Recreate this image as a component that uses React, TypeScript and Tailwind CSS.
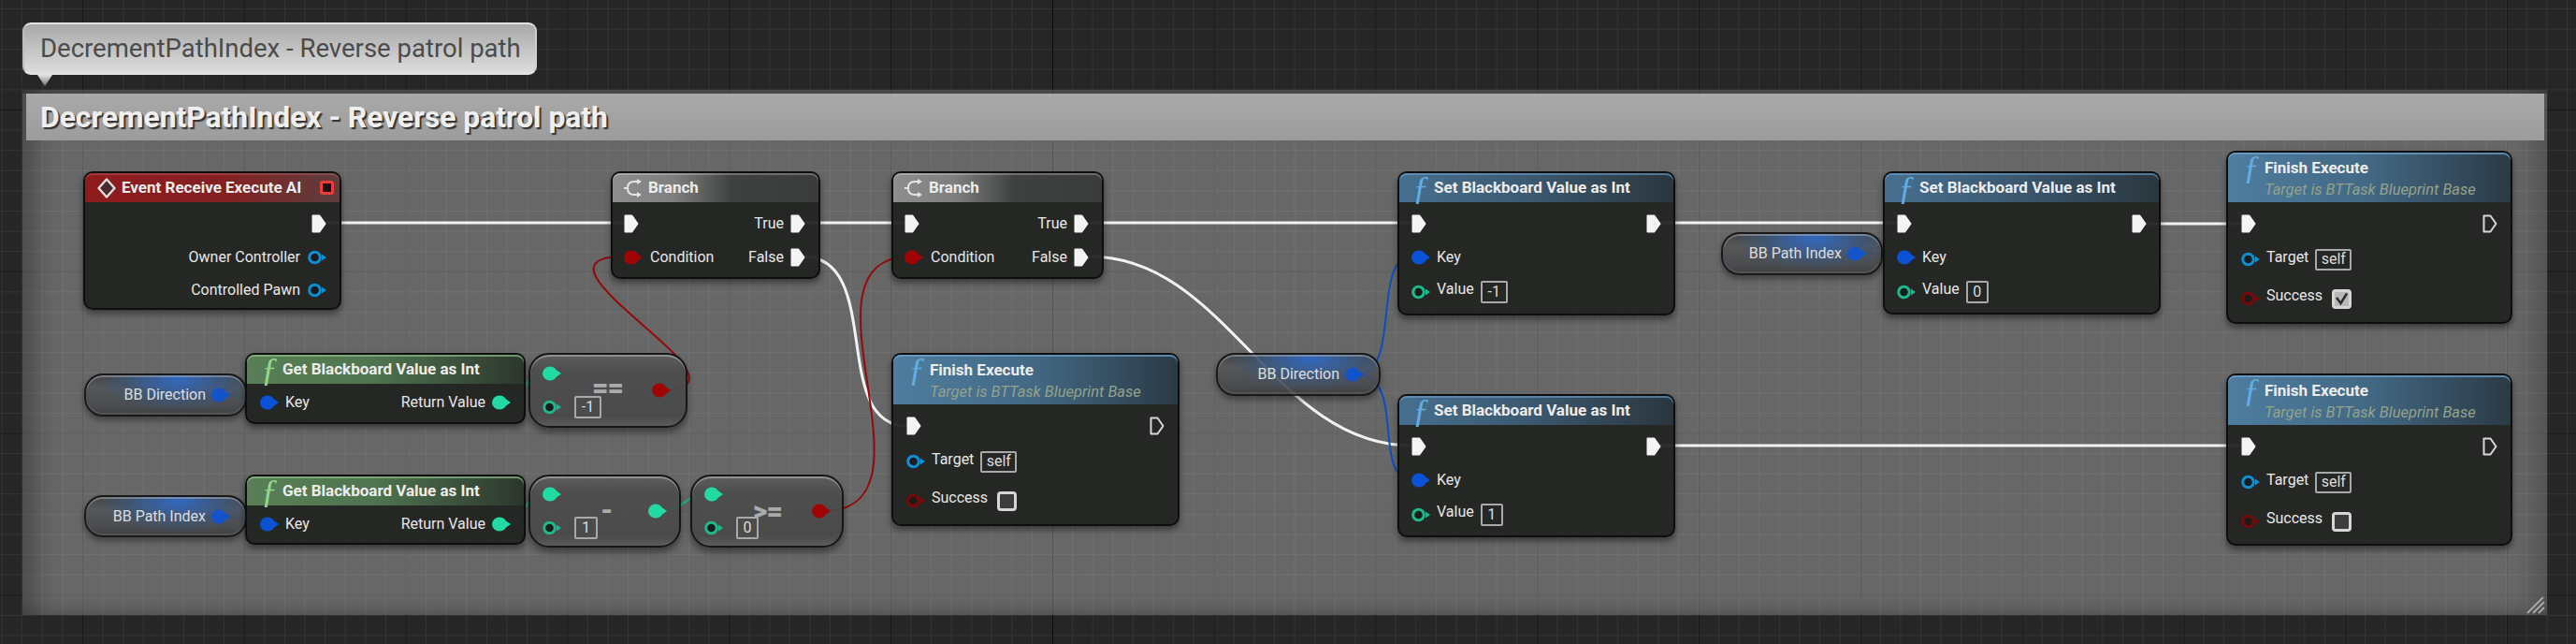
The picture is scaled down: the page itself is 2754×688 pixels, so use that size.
import React from "react";

const BLUE = "#0a8fd8";
const KEY = "#0a52d6";
const INT = "#22dba4";
const INTH = "#1fb88c";
const RED = "#a00505";
const REDH = "#7a0808";

function Pin({ color, hollow }: { color: string; hollow?: boolean }) {
  return (
    <svg width="20" height="16" viewBox="0 0 20 16" className="shrink-0">
      {hollow ? (
        <ellipse cx="7.5" cy="8" rx="5.8" ry="5.8" fill="#1a1c1b" stroke={color} strokeWidth="3" />
      ) : (
        <ellipse cx="8" cy="8" rx="8" ry="7.6" fill={color} />
      )}
      <path d="M15 4.5 L20 8 L15 11.5 Z" fill={color} />
    </svg>
  );
}

function Exec({ hollow }: { hollow?: boolean }) {
  return (
    <svg width="16" height="20" viewBox="0 0 16 20" className="shrink-0">
      <path
        d="M1.5 1.5 H8.5 L14.5 10 L8.5 18.5 H1.5 Z"
        fill={hollow ? "none" : "#f4f4f4"}
        stroke={hollow ? "#d8d8d8" : "#f4f4f4"}
        strokeWidth="2"
        strokeLinejoin="round"
      />
    </svg>
  );
}

function Label({ children, className = "" }: { children: React.ReactNode; className?: string }) {
  return <span className={"text-[16px] leading-none text-[#e8e8e8] whitespace-nowrap " + className}>{children}</span>;
}

function Box({ children, className = "" }: { children: React.ReactNode; className?: string }) {
  return (
    <span className={"flex items-center justify-center rounded-[2px] border-2 border-[#a9a9a9] text-[16px] leading-none text-[#dcdcdc] " + className}>
      {children}
    </span>
  );
}

function Check({ checked }: { checked?: boolean }) {
  return (
    <span
      className={
        "ml-[3px] flex h-[21px] w-[21px] items-center justify-center rounded-[4px] border-[3px] border-[#d6d6d6] " +
        (checked ? "bg-[#b8b8b8]" : "bg-[#3c3c3c]")
      }
    >
      {checked && (
        <svg width="15" height="15" viewBox="0 0 15 15">
          <path d="M2 6 L6.5 12 L13 1.5" fill="none" stroke="#2b2b2b" strokeWidth="2.4" />
        </svg>
      )}
    </span>
  );
}

function FIcon({ className }: { className: string }) {
  return (
    <span className={"[font-family:'Liberation_Serif',serif] italic text-[36px] leading-[28px] " + className}>ƒ</span>
  );
}

const nodeBase =
  "absolute rounded-[10px] border-2 border-[#0e0e0e] bg-[#222422]/95 shadow-[0_4px_7px_rgba(0,0,0,0.45)]";
const rowBase = "flex h-[36px] items-center justify-between";
const titleCls = "text-[17px] font-bold leading-none text-[#ececec] whitespace-nowrap";

function SetNode({ pos, value, boxW }: { pos: string; value: string; boxW: string }) {
  return (
    <div className={nodeBase + " " + pos}>
      <div className="flex h-[31px] items-center rounded-t-[8px] bg-[linear-gradient(to_right,#466f8f,#3c5a72_45%,#2a363e)] pl-[14px] shadow-[inset_0_2px_0_rgba(110,160,205,0.6)]">
        <FIcon className="w-[23px] text-[#62aee4]" />
        <span className={titleCls}>Set Blackboard Value as Int</span>
      </div>
      <div className="px-[13px] pt-[5px]">
        <div className={rowBase}>
          <Exec />
          <Exec />
        </div>
        <div className="flex h-[36px] items-center gap-[7px]">
          <Pin color={KEY} />
          <Label>Key</Label>
        </div>
        <div className="flex h-[38px] items-center gap-[7px]">
          <Pin color={INTH} hollow />
          <Label className="-translate-y-[3px]">Value</Label>
          <Box className={"h-[24px] " + boxW}>{value}</Box>
        </div>
      </div>
    </div>
  );
}

function FinishNode({ pos, checked }: { pos: string; checked?: boolean }) {
  return (
    <div className={nodeBase + " " + pos}>
      <div className="h-[53px] rounded-t-[8px] bg-[linear-gradient(to_right,#4f7d9f,#426884_50%,#2b3a45)] pl-[16px] pt-[2px] shadow-[inset_0_2px_0_rgba(110,165,210,0.7)]">
        <div className="flex h-[28px] items-center">
          <FIcon className="w-[23px] text-[#62aee4]" />
          <span className={titleCls}>Finish Execute</span>
        </div>
        <div className="ml-[23px] mt-[2px] text-[16.5px] italic leading-none text-[#94a28a] whitespace-nowrap">
          Target is BTTask Blueprint Base
        </div>
      </div>
      <div className="px-[14px] pt-[5px]">
        <div className={rowBase}>
          <Exec />
          <Exec hollow />
        </div>
        <div className="flex h-[40px] items-center gap-[7px]">
          <Pin color={BLUE} hollow />
          <Label className="-translate-y-[2px]">Target</Label>
          <Box className="h-[23px] w-[39px]">self</Box>
        </div>
        <div className="flex h-[44px] items-center gap-[7px]">
          <Pin color={REDH} hollow />
          <Label className="-translate-y-[3px]">Success</Label>
          <Check checked={checked} />
        </div>
      </div>
    </div>
  );
}

function GetNode({ pos }: { pos: string }) {
  return (
    <div className={nodeBase + " " + pos}>
      <div className="flex h-[31px] items-center rounded-t-[8px] bg-[linear-gradient(to_right,#587f56,#4f7550_45%,#2c362d)] pl-[15px] shadow-[inset_0_2px_0_rgba(140,190,135,0.7)]">
        <FIcon className="w-[23px] text-[#93d78e]" />
        <span className={titleCls}>Get Blackboard Value as Int</span>
      </div>
      <div className={rowBase + " px-[14px] pt-[4px]"}>
        <div className="flex items-center gap-[7px]">
          <Pin color={KEY} />
          <Label>Key</Label>
        </div>
        <div className="flex items-center gap-[7px]">
          <Label>Return Value</Label>
          <Pin color={INT} />
        </div>
      </div>
    </div>
  );
}

function BranchNode({ pos }: { pos: string }) {
  return (
    <div className={nodeBase + " " + pos}>
      <div className="flex h-[31px] items-center gap-[6px] rounded-t-[8px] bg-[linear-gradient(to_right,#8e8e8e,#7e7e7e_30%,#3f4141_58%,#3a3c3c)] pl-[12px] shadow-[inset_0_2px_0_rgba(255,255,255,0.25)]">
        <svg width="20" height="20" viewBox="0 0 20 20" className="shrink-0">
          <path d="M0 10 H4 M4 10 C4 5 7 3 11 3 H16 M4 10 C4 15 7 17 11 17 H16" fill="none" stroke="#e4e4e4" strokeWidth="2" />
          <path d="M14 0 L19 3 L14 6 Z M14 14 L19 17 L14 20 Z" fill="#e4e4e4" />
        </svg>
        <span className={titleCls}>Branch</span>
      </div>
      <div className="px-[12px] pt-[5px]">
        <div className={rowBase + " pr-[2px]"}>
          <Exec />
          <div className="flex items-center gap-[7px]">
            <Label>True</Label>
            <Exec />
          </div>
        </div>
        <div className={rowBase + " pr-[2px]"}>
          <div className="flex items-center gap-[8px]">
            <Pin color={RED} />
            <Label>Condition</Label>
          </div>
          <div className="flex items-center gap-[7px]">
            <Label>False</Label>
            <Exec />
          </div>
        </div>
      </div>
    </div>
  );
}

function Pill({ pos, label }: { pos: string; label: string }) {
  return (
    <div
      className={
        "absolute flex items-center justify-end gap-[6px] rounded-[20px] border-2 border-[#111111] bg-[radial-gradient(ellipse_50%_80%_at_58%_12%,rgba(45,105,200,1),rgba(55,85,125,0.7)_65%,rgba(70,72,74,0)_100%),linear-gradient(to_bottom,#3e4042,#545658_30%,#47494c_80%,#3a3b3d)] pr-[16px] opacity-90 shadow-[inset_0_2px_0_rgba(200,200,200,0.45),inset_0_-2px_0_rgba(200,200,200,0.15),0_4px_6px_rgba(0,0,0,0.4)] " +
        pos
      }
    >
      <Label>{label}</Label>
      <Pin color={KEY} />
    </div>
  );
}

const cmpBase =
  "absolute flex items-center justify-between rounded-[22px] border-2 border-[#161616] bg-[linear-gradient(to_bottom,rgba(92,92,92,0.92),rgba(76,76,76,0.92)_22%,rgba(72,72,72,0.92)_85%,rgba(90,90,90,0.92))] pl-[13px] shadow-[inset_0_2px_0_rgba(210,210,210,0.45),0_5px_7px_rgba(0,0,0,0.4)]";

function Compare({
  pos,
  glyph,
  glyphPos,
  value,
  boxW,
  out,
  pr,
}: {
  pos: string;
  glyph: string;
  glyphPos: string;
  value: string;
  boxW: string;
  out: string;
  pr: string;
}) {
  return (
    <div className={cmpBase + " " + pos + " " + pr}>
      <div>
        <div className="flex h-[36px] items-center">
          <Pin color={INT} />
        </div>
        <div className="flex h-[36px] items-center gap-[14px]">
          <Pin color={INTH} hollow />
          <Box className={"h-[24px] " + boxW}>{value}</Box>
        </div>
      </div>
      <span className={"absolute font-black leading-none text-[#ababab] " + glyphPos}>{glyph}</span>
      <Pin color={out} />
    </div>
  );
}

export default function App() {
  return (
    <div className="relative h-[688px] w-[2754px] overflow-hidden bg-[#262626] bg-[linear-gradient(to_right,#171717_1px,transparent_1px),linear-gradient(to_bottom,#171717_1px,transparent_1px),linear-gradient(to_right,#343434_1px,transparent_1px),linear-gradient(to_bottom,#343434_1px,transparent_1px)] [background-position:88px_117px] [background-size:172.8px_172.8px,172.8px_172.8px,21.6px_21.6px,21.6px_21.6px] [font-family:Roboto,sans-serif]">
      <div className="absolute left-[1125px] top-0 h-full w-[1px] bg-[#0c0c0c]" />

      {/* comment bubble */}
      <div className="absolute left-[24px] top-[24px] flex h-[56px] w-[550px] items-center rounded-[9px] border-2 border-b-[3px] border-[#e2e2e2] border-l-[#bdbdbd] border-r-[#cfcfcf] bg-[linear-gradient(to_bottom,#a9a9a9,#dcdcdc)] pl-[17px]">
        <span className="whitespace-nowrap text-[27.5px] leading-none text-[#4b4b4b]">DecrementPathIndex - Reverse patrol path</span>
      </div>
      <div className="absolute left-[40px] top-[80px] h-[12px] w-[16px] bg-[linear-gradient(to_bottom,#e2e2e2,#777777)] [clip-path:polygon(0_0,100%_0,50%_100%)]" />

      {/* comment box */}
      <div className="absolute left-[24px] top-[96px] h-[561px] w-[2699px] bg-white/30 pt-[4px] shadow-[inset_36px_0_26px_-22px_rgba(0,0,0,0.28),inset_-36px_0_26px_-22px_rgba(0,0,0,0.2),inset_0_-22px_16px_-14px_rgba(0,0,0,0.16),inset_0_4px_0_rgba(0,0,0,0.28)]">
        <div className="ml-[4px] mr-[3px] flex h-[50px] items-center bg-[linear-gradient(to_bottom,#a9a9a9,#9c9c9c)] pb-[0px] pl-[15px] pt-[2px]">
          <span className="whitespace-nowrap text-[31.8px] font-bold leading-none text-[#efefef] [text-shadow:2px_2px_1px_rgba(30,30,30,0.85)]">
            DecrementPathIndex - Reverse patrol path
          </span>
        </div>
      </div>
      <svg className="absolute left-[2700px] top-[636px]" width="22" height="20" viewBox="0 0 22 20">
        <path d="M2 19 L19 2 M8 19 L20 7 M14 19 L20 13" stroke="#a8a8a8" strokeWidth="2" fill="none" />
      </svg>

      {/* wires */}
      <svg className="absolute inset-0" width="2754" height="688" viewBox="0 0 2754 688" fill="none">
        <g stroke="#f2f2f2" strokeWidth="3">
          <path d="M345 238 H670" />
          <path d="M858 238 H970" />
          <path d="M858 274 C946 274 886 455 970 455" />
          <path d="M1165 238 H1510" />
          <path d="M1165 274 C1311 274 1361 476 1510 476" />
          <path d="M1770 238 H2040" />
          <path d="M2290 239 H2400" />
          <path d="M1770 476 H2400" />
        </g>
        <g stroke="#96090a" strokeWidth="2">
          <path d="M705 417 C830 417 540 274 668 274" />
          <path d="M880 546 C1015 546 840 274 974 274" />
        </g>
        <g stroke="#0b4fc4" strokeWidth="2">
          <path d="M238 421 C262 421 262 431 290 431" />
          <path d="M238 551 C262 551 262 560 290 560" />
          <path d="M1986 270 C2010 270 2012 275 2040 275" />
          <path d="M1450 400 C1500 400 1465 274 1510 274" />
          <path d="M1450 400 C1505 400 1465 512 1510 512" />
        </g>
        <g stroke="#1fb88c" strokeWidth="2">
          <path d="M535 431 C565 431 555 396 590 396" />
          <path d="M535 560 C565 560 555 526 590 526" />
          <path d="M705 546 C735 546 730 526 763 526" />
        </g>
      </svg>

      {/* Event node */}
      <div className={nodeBase + " left-[89px] top-[183px] h-[148px] w-[276px]"}>
        <div className="flex h-[31px] items-center rounded-t-[8px] bg-[linear-gradient(to_right,#8e1b1e,#842022_55%,#5c3e3e)] pl-[13px] pr-[6px] shadow-[inset_0_2px_0_rgba(200,110,110,0.35)]">
          <svg width="20" height="22" viewBox="0 0 20 22" className="shrink-0">
            <path d="M10 1.5 L18.5 11 L10 20.5 L1.5 11 Z" fill="#4a2a2a" stroke="#dedede" strokeWidth="2.4" strokeLinejoin="round" />
          </svg>
          <span className={"ml-[6px] " + titleCls}>Event Receive Execute AI</span>
          <span className="ml-auto h-[15px] w-[15px] rounded-[3px] border-[3px] border-[#f23a3a] bg-[#1c1010]" />
        </div>
        <div className="pr-[14px] pt-[5px]">
          <div className="flex h-[36px] items-center justify-end">
            <Exec />
          </div>
          <div className="flex h-[36px] items-center justify-end gap-[8px]">
            <Label>Owner Controller</Label>
            <Pin color={BLUE} hollow />
          </div>
          <div className="flex h-[34px] items-center justify-end gap-[8px]">
            <Label>Controlled Pawn</Label>
            <Pin color={BLUE} hollow />
          </div>
        </div>
      </div>

      <BranchNode pos="left-[653px] top-[183px] h-[115px] w-[224px]" />
      <BranchNode pos="left-[953px] top-[183px] h-[115px] w-[227px]" />

      <Pill pos="left-[90px] top-[399px] h-[46px] w-[174px]" label="BB Direction" />
      <Pill pos="left-[90px] top-[529px] h-[45px] w-[174px]" label="BB Path Index" />
      <Pill pos="left-[1300px] top-[377px] h-[46px] w-[176px]" label="BB Direction" />
      <Pill pos="left-[1840px] top-[248px] h-[46px] w-[173px]" label="BB Path Index" />

      <GetNode pos="left-[262px] top-[377px] h-[76px] w-[300px]" />
      <GetNode pos="left-[262px] top-[507px] h-[75px] w-[300px]" />

      <Compare
        pos="left-[565px] top-[377px] h-[80px] w-[170px]"
        glyph="=="
        glyphPos="left-[66px] top-[20px] text-[30px] tracking-[-1px]"
        value="-1"
        boxW="w-[29px]"
        out={RED}
        pr="pr-[16px]"
      />
      <Compare
        pos="left-[565px] top-[507px] h-[78px] w-[163px]"
        glyph="-"
        glyphPos="left-[75px] top-[21px] text-[30px]"
        value="1"
        boxW="w-[25px]"
        out={INT}
        pr="pr-[13px]"
      />
      <Compare
        pos="left-[738px] top-[507px] h-[78px] w-[164px]"
        glyph=">="
        glyphPos="left-[65px] top-[22px] text-[30px] tracking-[-1px]"
        value="0"
        boxW="w-[24px]"
        out={RED}
        pr="pr-[12px]"
      />

      <FinishNode pos="left-[953px] top-[377px] h-[185px] w-[308px]" />
      <SetNode pos="left-[1494px] top-[183px] h-[154px] w-[297px]" value="-1" boxW="w-[29px]" />
      <SetNode pos="left-[1494px] top-[421px] h-[153px] w-[297px]" value="1" boxW="w-[24px]" />
      <SetNode pos="left-[2013px] top-[183px] h-[153px] w-[297px]" value="0" boxW="w-[24px]" />
      <FinishNode pos="left-[2380px] top-[161px] h-[185px] w-[306px]" checked />
      <FinishNode pos="left-[2380px] top-[399px] h-[184px] w-[306px]" />
    </div>
  );
}
